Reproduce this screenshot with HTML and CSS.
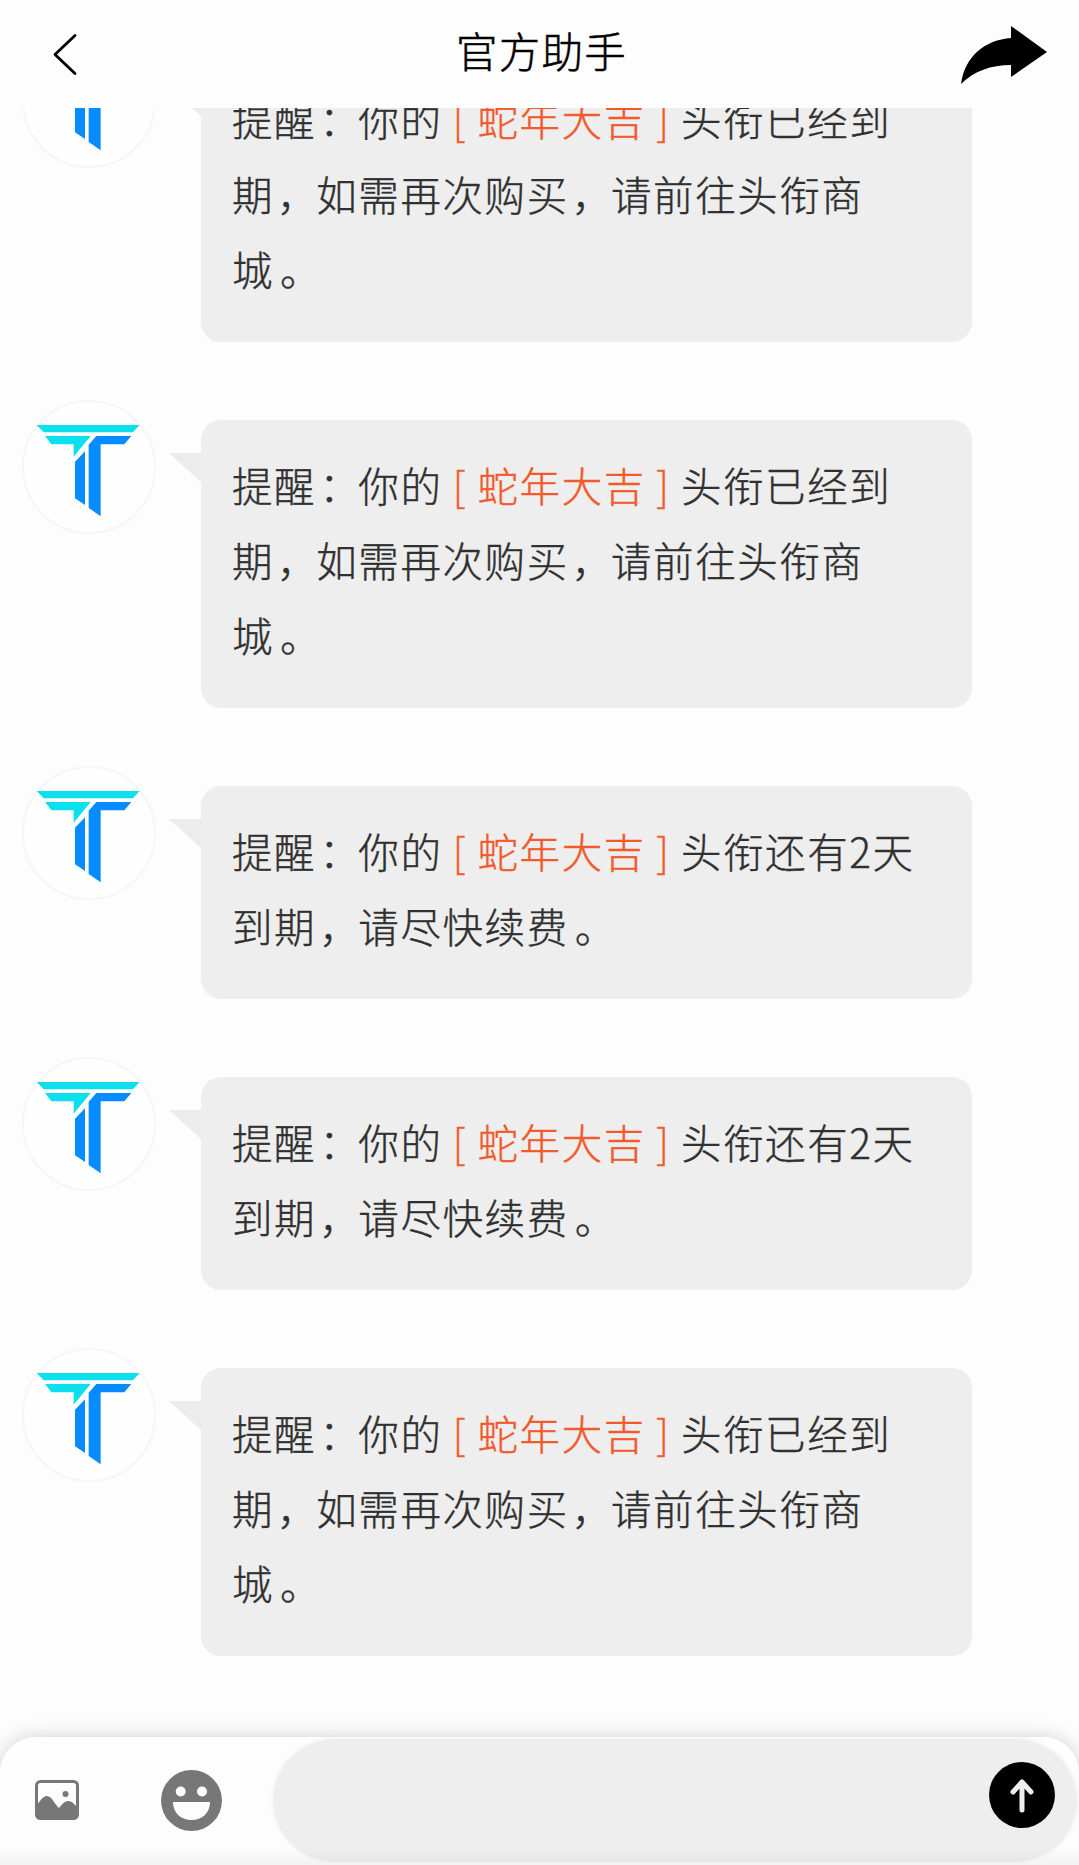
FILE: index.html
```html
<!DOCTYPE html>
<html lang="zh-CN">
<head>
<meta charset="utf-8">
<title>官方助手</title>
<link rel="stylesheet" href="styles.css">
</head>
<body>
<svg class="defs" width="0" height="0" aria-hidden="true">
  <symbol id="logo" viewBox="0 0 402 402">
    <path fill="#0be0ec" d="M44 75H353L333 97H65ZM69 108H206L155 170V133H88Z"/>
    <path fill="#068cff" d="M223 108H328L307 133H236V349L200 324V134ZM189 154V315L159 295V185Z"/>
  </symbol>
</svg>
<div class="app">
  <header class="header">
    <svg class="back" viewBox="0 0 30 50"><path d="M24 6.500L4 25.500L24 44.500"/></svg>
    <h1 class="title">官方助手</h1>
    <svg class="share" viewBox="0 0 88 58"><path d="M51 0L87 26L51 51V39C31 39 14 45 1 58C5 30 25 14 51 12Z"/></svg>
  </header>
  <main class="chat">
    <section class="message">
      <div class="avatar"><svg><use href="#logo"/></svg></div>
      <p class="bubble">提醒<b>：</b>你的<span class="tag"><i>[</i>蛇年大吉<i>]</i></span>头衔已经到<br>期<b>，</b>如需再次购买<b>，</b>请前往头衔商<br>城<b class="stop">。</b></p>
    </section>
    <section class="message">
      <div class="avatar"><svg><use href="#logo"/></svg></div>
      <p class="bubble">提醒<b>：</b>你的<span class="tag"><i>[</i>蛇年大吉<i>]</i></span>头衔已经到<br>期<b>，</b>如需再次购买<b>，</b>请前往头衔商<br>城<b class="stop">。</b></p>
    </section>
    <section class="message">
      <div class="avatar"><svg><use href="#logo"/></svg></div>
      <p class="bubble">提醒<b>：</b>你的<span class="tag"><i>[</i>蛇年大吉<i>]</i></span>头衔还有2天<br>到期<b>，</b>请尽快续费<b class="stop">。</b></p>
    </section>
    <section class="message">
      <div class="avatar"><svg><use href="#logo"/></svg></div>
      <p class="bubble">提醒<b>：</b>你的<span class="tag"><i>[</i>蛇年大吉<i>]</i></span>头衔还有2天<br>到期<b>，</b>请尽快续费<b class="stop">。</b></p>
    </section>
    <section class="message">
      <div class="avatar"><svg><use href="#logo"/></svg></div>
      <p class="bubble">提醒<b>：</b>你的<span class="tag"><i>[</i>蛇年大吉<i>]</i></span>头衔已经到<br>期<b>，</b>如需再次购买<b>，</b>请前往头衔商<br>城<b class="stop">。</b></p>
    </section>
  </main>
  <footer class="composer">
    <svg class="picture" viewBox="0 0 44 40">
      <rect x="1.500" y="1.500" width="41" height="37" rx="4" fill="none" stroke="#777" stroke-width="3"/>
      <path fill="#777" d="M2 25C7 18 9 16 12 16C17 16 20 25 24 28C27 24 30 21 33 21C37 21 39 24 42 27V38H2Z"/>
      <circle cx="30.500" cy="14" r="3" fill="#777"/>
    </svg>
    <svg class="smile" viewBox="0 0 61 61">
      <circle cx="30.500" cy="30.500" r="30.500" fill="#777"/>
      <circle cx="19.700" cy="21.500" r="5" fill="#fdfdfd"/>
      <circle cx="41" cy="21.500" r="5" fill="#fdfdfd"/>
      <path fill="#fdfdfd" d="M12 32H49C49 43 41 50 30.500 50S12 43 12 32Z"/>
    </svg>
    <div class="input">
      <button class="send" aria-label="发送"><svg viewBox="0 0 66 66"><path d="M33 48V20M24 30L33 20L42 30"/></svg></button>
    </div>
  </footer>
</div>
</body>
</html>
```
FILE: styles.css
```css
* { box-sizing: border-box; }
body {
  margin: 0;
  background: #fdfdfd;
  font-family: "Noto Sans CJK SC", sans-serif;
  font-weight: 300;
  color: #303030;
}
.defs { position: absolute; }
.app {
  display: flex;
  flex-direction: column;
  height: 1865px;
  overflow: hidden;
}
.header {
  display: flex;
  align-items: center;
  flex: none;
  height: 108px;
  padding: 0 31px 0 51px;
  background: #fdfdfd;
  z-index: 1;
}
.back { width: 30px; height: 50px; fill: none; stroke: #000; stroke-width: 2.8; stroke-linecap: round; stroke-linejoin: round; }
.title {
  flex: 1;
  margin: 0 0 4px 42px;
  padding-bottom: 4px;
  color: #000;
  font-size: 41.5px;
  font-weight: 300;
  -webkit-text-stroke: .5px;
  letter-spacing: 1.2px;
  line-height: 60px;
  text-align: center;
}
.share { width: 88px; height: 58px; margin-top: 1px; }
.chat {
  display: flex;
  flex-direction: column;
  flex: 1;
  gap: 78px;
  margin-top: -54px;
  min-height: 0;
}
.message { display: flex; align-items: flex-start; gap: 45px; padding-left: 22px; }
.avatar {
  flex: none;
  width: 134px;
  height: 134px;
  margin: -20px 0 -30px;
  border: 2px solid #f6f6f6;
  border-radius: 50%;
  background: #fefefe;
}
.avatar svg { display: block; width: 134px; height: 134px; margin: -2px; }
.bubble {
  position: relative;
  width: 771px;
  margin: 0;
  padding: 27px 20px 36px 31px;
  border-radius: 20px;
  background: #eee;
  font-size: 40.5px;
  -webkit-text-stroke: .4px;
  letter-spacing: 1.6px;
  line-height: 75px;
  white-space: nowrap;
}
.bubble::before {
  content: "";
  position: absolute;
  left: -32px;
  top: 33px;
  width: 33px;
  height: 30px;
  background: #ececec;
  clip-path: polygon(0 0, 100% 0, 100% 100%);
}
.bubble b { margin: 0 -3px 0 3px; font-weight: 300; }
.bubble .stop { margin: 0 -6px 0 6px; }
.tag { color: #f15a2b; }
.tag i { display: inline-block; width: 35px; font-style: normal; text-align: center; }
.composer {
  display: flex;
  flex: none;
  height: 128px;
  padding: 2px 2px 3px 35px;
  border-radius: 36px 36px 0 0;
  background: linear-gradient(#fdfdfd 110px, #f3f3f3);
  box-shadow: 0 0 20px rgba(0, 0, 0, .18);
  z-index: 1;
}
.picture { width: 44px; height: 40px; margin-top: 41px; }
.smile { width: 61px; height: 61px; margin: 31px 51px 0 82px; }
.input {
  display: flex;
  flex: 1;
  justify-content: flex-end;
  align-items: flex-start;
  padding: 23px 22px 0;
  border-radius: 62px;
  background: linear-gradient(#eee 108px, #e7e7e7);
  box-shadow: 0 0 4px #eee;
}
.send { width: 66px; height: 66px; padding: 0; border: 0; border-radius: 50%; background: #000; }
.send svg { display: block; fill: none; stroke: #eee; stroke-width: 5; stroke-linecap: round; stroke-linejoin: round; }
```
